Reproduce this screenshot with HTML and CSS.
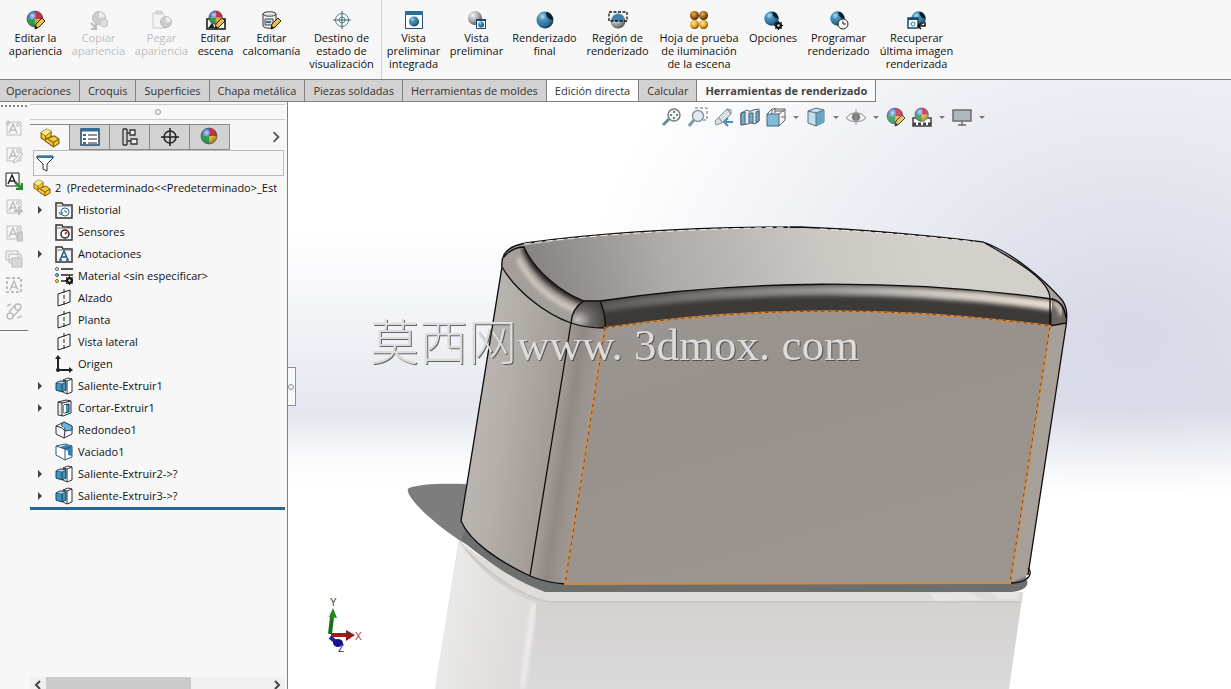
FILE: index.html
```html
<!DOCTYPE html>
<html lang="es">
<head>
<meta charset="utf-8">
<title>Herramientas de renderizado</title>
<link rel="stylesheet" href="styles.css">
</head>
<body>
<svg class="sprite" aria-hidden="true">
  <defs>
    <radialGradient id="gBlue" cx=".35" cy=".3" r=".75"><stop offset="0" stop-color="#b9def0"/><stop offset=".3" stop-color="#4a94be"/><stop offset=".75" stop-color="#2a6c96"/><stop offset="1" stop-color="#0d2738"/></radialGradient>
    <radialGradient id="gGray" cx=".35" cy=".3" r=".8"><stop offset="0" stop-color="#f6f6f6"/><stop offset=".5" stop-color="#aaa"/><stop offset="1" stop-color="#444"/></radialGradient>
    <radialGradient id="gGold" cx=".4" cy=".35" r=".7"><stop offset="0" stop-color="#ffe9a0"/><stop offset=".6" stop-color="#e0a020"/><stop offset="1" stop-color="#5a3000"/></radialGradient>
    <radialGradient id="gBrown" cx=".4" cy=".35" r=".7"><stop offset="0" stop-color="#f0b050"/><stop offset=".6" stop-color="#94560e"/><stop offset="1" stop-color="#2c1600"/></radialGradient>
    <radialGradient id="gShine" cx=".35" cy=".3" r=".7"><stop offset="0" stop-color="#fff" stop-opacity=".75"/><stop offset=".4" stop-color="#fff" stop-opacity="0"/><stop offset="1" stop-color="#000" stop-opacity=".3"/></radialGradient>
  </defs>
  <symbol id="ball" viewBox="0 0 20 20"><path d="M9 9V1a8 8 0 0 0-8 7z" fill="#3a66c8"/><path d="M9 9V1a8 8 0 0 1 8 8z" fill="#c8283c"/><path d="M9 9H17a8 8 0 0 1-9 8z" fill="#e0b02c"/><path d="M9 9 1 8a8 8 0 0 0 8 9z" fill="#27994a"/><circle cx="9" cy="9" r="8" fill="url(#gShine)" stroke="#444" stroke-width=".6"/></symbol>
  <symbol id="pencil" viewBox="0 0 20 20"><path d="M16 8l3 3-6 6-4 2 1-5z" fill="#f0c040" stroke="#222"/><path d="M9 19l1-3 2 2z" fill="#111"/></symbol>
  <symbol id="edit-app" viewBox="0 0 20 20"><use href="#ball" width="20" height="20"/><use href="#pencil"/></symbol>
  <symbol id="copy-app" viewBox="0 0 20 20"><circle cx="10" cy="8" r="6.5" fill="#ccc" stroke="#bbb"/><path d="M10 8V2a7 7 0 0 1 6 5z" fill="#eee"/><circle cx="15" cy="13" r="4" fill="#ddd" stroke="#c4c4c4"/><path d="M2 13l5 5M7 14v5H2" fill="none" stroke="#bbb" stroke-width="2"/></symbol>
  <symbol id="paste-app" viewBox="0 0 20 20"><path d="M1 3h9l4 4v11H1z" fill="#f4f4f4" stroke="#c8c8c8"/><path d="M4 1h6v3H4z" fill="#ddd" stroke="#c8c8c8"/><circle cx="14" cy="12" r="5.500" fill="#ccc" stroke="#bbb"/><path d="M14 12V7a5 5 0 0 1 5 5z" fill="#eee"/></symbol>
  <symbol id="edit-scene" viewBox="0 0 20 20"><path d="M1 9v10h18V9z" fill="#fff" stroke="#111" stroke-width="1.500"/><path d="M2 18l4-5 3 5z" fill="#222"/><use href="#ball" x="2" width="17" height="17"/><use href="#pencil"/></symbol>
  <symbol id="scene-view" viewBox="0 0 20 20"><path d="M1 11h18v8H1z" fill="#fff" stroke="#222" stroke-width="1.500"/><path d="M1 17h18" stroke="#222" stroke-width="3" stroke-dasharray="3 2"/><use href="#ball" x="2" width="17" height="17"/></symbol>
  <symbol id="decal" viewBox="0 0 20 20"><path d="M1 4c0-3 13-3 13 0v12c0 3-12 3-13 0z" fill="#eee" stroke="#333"/><path d="M1 4c1 3 12 3 13 0M3 9h8v6H3z" fill="#d8d8d8" stroke="#444"/><path d="M4 12h5" stroke="#3778a4" stroke-width="2"/><use href="#pencil"/></symbol>
  <symbol id="target" viewBox="0 0 20 20"><circle cx="10" cy="10" r="6.500" fill="none" stroke="#5a7c86"/><circle cx="10" cy="10" r="3" fill="none" stroke="#3f9a9c"/><path d="M10 1v18M1 10h18" stroke="#446068"/></symbol>
  <symbol id="prev-int" viewBox="0 0 20 20"><path d="M1.500 1.500h17v17h-17z" fill="#fff" stroke="#1f4f70"/><path d="M1 1h18v4H1z" fill="#2c6c98"/><circle cx="10" cy="11.500" r="5" fill="url(#gBlue)"/></symbol>
  <symbol id="prev" viewBox="0 0 20 20"><circle cx="8" cy="8" r="7" fill="url(#gGray)"/><path d="M9.500 9.500h9v9h-9z" fill="#fff" stroke="#174a6c"/><path d="M9 9h10v2H9z" fill="#174a6c"/><circle cx="14" cy="14.500" r="3" fill="url(#gBlue)"/></symbol>
  <symbol id="render" viewBox="0 0 20 20"><circle cx="10" cy="10" r="8.500" fill="url(#gBlue)"/><path d="M11 2c4 0 7 4 7 8-4 0-7-3-7-8z" fill="#0b1b28"/></symbol>
  <symbol id="region" viewBox="0 0 20 20"><circle cx="10" cy="11" r="7.500" fill="url(#gGray)"/><path d="M5 6q5-5 10 0l2 5H3z" fill="#3f83ac"/><path d="M1 2h18v9H1z" fill="none" stroke="#111" stroke-width="1.300" stroke-dasharray="3 1.500"/></symbol>
  <symbol id="proof" viewBox="0 0 20 20"><circle cx="5.500" cy="5.500" r="4.500" fill="url(#gBrown)"/><circle cx="14.500" cy="5.500" r="4.500" fill="url(#gBrown)"/><circle cx="5.500" cy="14.500" r="4.500" fill="url(#gGold)"/><circle cx="14.500" cy="14.500" r="4.500" fill="url(#gGold)"/></symbol>
  <symbol id="gear" viewBox="0 0 10 10"><circle cx="5" cy="5" r="3" fill="none" stroke="#151515" stroke-width="2"/><path d="M5 0v10M0 5h10M1.500 1.500l7 7M8.500 1.500l-7 7" stroke="#151515" stroke-width="1.300"/><circle cx="5" cy="5" r="1.400" fill="#ddd"/></symbol>
  <symbol id="options" viewBox="0 0 20 20"><use href="#render" width="17" height="17"/><use href="#gear" x="11" y="11" width="9" height="9"/></symbol>
  <symbol id="sched" viewBox="0 0 20 20"><use href="#render" width="17" height="17"/><circle cx="14" cy="14" r="5" fill="#fff" stroke="#222"/><path d="M14 11v3h3" fill="none" stroke="#222"/></symbol>
  <symbol id="recall" viewBox="0 0 20 20"><use href="#render" x="3" width="17" height="17"/><path d="M1 8h10v10H1z" fill="#fff" stroke="#174a6c" stroke-width="1.500"/><path d="M1 9h10" stroke="#174a6c" stroke-width="2"/><circle cx="6" cy="14" r="2" fill="#fff" stroke="#287"/><path d="M18 12v4h-6M14 13l-3 3 3 3" fill="none" stroke="#111" stroke-width="1.500"/></symbol>
  <symbol id="part" viewBox="0 0 18 18"><path d="M1 4l5-3 4 2v5l3-1 4 3v4l-5 3L1 9z" fill="#f4c838" stroke="#7a5a08"/><path d="M1 4l4 3 5-4M5 7v4M5 10l5-2M12 17v-4l5-3M12 13L7 10" fill="none" stroke="#7a5a08"/><path d="M1 4l5-3 4 2-5 4z" fill="#ffe98a"/></symbol>
  <symbol id="props" viewBox="0 0 20 20"><path d="M1 2h18v16H1z" fill="#fff" stroke="#1b4a70" stroke-width="1.500"/><path d="M1 3h18" stroke="#2c6c98" stroke-width="3"/><path d="M3 8h3M3 12h3M3 16h3" stroke="#2c6c98" stroke-width="2"/><path d="M8 8h9M8 12h9M8 16h9" stroke="#222"/></symbol>
  <symbol id="config" viewBox="0 0 20 20"><path d="M3 2h4M3 18h4M3 2v16M7 2v16M7 6h4M7 14h4" fill="none" stroke="#333" stroke-width="1.300"/><path d="M10 3h5v5h-5zM11 12h6v5h-6z" fill="#eee" stroke="#333" stroke-width="1.300"/></symbol>
  <symbol id="cross" viewBox="0 0 20 20"><circle cx="10" cy="10" r="6" fill="none" stroke="#222" stroke-width="1.500"/><path d="M10 1v18M1 10h18" stroke="#222" stroke-width="1.500"/></symbol>
  <symbol id="funnel" viewBox="0 0 18 18"><path d="M1 2h16v2l-6 6v7l-4-2v-5L1 4z" fill="#fff" stroke="#333"/><path d="M1 2h16v2H1z" fill="#2c7cab"/></symbol>
  <symbol id="folder" viewBox="0 0 18 18"><path d="M1 17V2h6l1 2h9v13z" fill="#f3f6fa" stroke="#333" stroke-width="1.500"/><path d="M1 5h16" stroke="#777"/></symbol>
  <symbol id="history" viewBox="0 0 18 18"><use href="#folder"/><circle cx="10" cy="11" r="4" fill="#fff" stroke="#2c6c98"/><path d="M10 9v2h2M4 11l2 3 2-3" fill="none" stroke="#2c6c98"/></symbol>
  <symbol id="sensor" viewBox="0 0 18 18"><use href="#folder"/><circle cx="10" cy="11" r="4" fill="#fff" stroke="#222" stroke-width="1.500"/><path d="M10 11l2-2" stroke="#c33" stroke-width="2"/></symbol>
  <symbol id="annot" viewBox="0 0 18 18"><use href="#folder"/><path d="M5 15l4-9 4 9M6 12h6M4 15h3M11 15h3" fill="none" stroke="#275c84" stroke-width="1.500"/></symbol>
  <symbol id="material" viewBox="0 0 18 18"><path d="M6 2h12M6 8h12M6 14h5" stroke="#222" stroke-width="1.500"/><circle cx="2" cy="2" r="1.500" fill="#fff" stroke="#555"/><circle cx="2" cy="8" r="1.500" fill="#9cd" stroke="#267"/><circle cx="2" cy="14" r="1.500" fill="#fe6" stroke="#862"/><use href="#gear" x="10" y="9" width="9" height="9"/></symbol>
  <symbol id="plane" viewBox="0 0 18 18"><path d="M3 5l12-4v12L3 17z" fill="none" stroke="#222"/><path d="M9 0v18" stroke="#222" stroke-dasharray="4 2"/></symbol>
  <symbol id="origin" viewBox="0 0 18 18"><path d="M3 2v13h13" fill="none" stroke="#222" stroke-width="2"/><path d="M3 0l3 4H0zM18 15l-4-3v6z" fill="#222"/><circle cx="3" cy="15" r="2" fill="#222"/></symbol>
  <symbol id="boss" viewBox="0 0 18 18"><path d="M8 3l5-2 4 1v13l-5 2-4-2z" fill="#fff" stroke="#333"/><path d="M12 4l5-2M12 4v13M8 3l4 1" stroke="#333"/><path d="M1 6l4-2 6 1v8l-4 2-6-2z" fill="#3f93be" stroke="#14405c"/><path d="M1 6l6 1 4-2-6-1z" fill="#a9d8ee" stroke="#14405c" stroke-width=".6"/><path d="M7 7v8" stroke="#14405c"/></symbol>
  <symbol id="cut" viewBox="0 0 18 18"><path d="M3 3l8-2 5 1v12l-8 3-5-1z" fill="#e4eaee" stroke="#333"/><path d="M3 3l4 1 9-2M7 4v13" fill="none" stroke="#333"/><path d="M9 6l5-1v8l-5 1z" fill="#3f93be" stroke="#14405c"/><path d="M9 6l2 0v7l-2 1z" fill="#fff"/></symbol>
  <symbol id="fillet" viewBox="0 0 18 18"><path d="M1 5l8-4 8 4v8l-8 4-8-4z" fill="#f6f6f6" stroke="#333"/><path d="M9 1l8 4v4l-7 1c0-3-1-4-4-6z" fill="#6fb2d3" stroke="#285a78"/><path d="M1 5l6 2 3 3-1 7" fill="none" stroke="#333"/></symbol>
  <symbol id="shell" viewBox="0 0 18 18"><path d="M1 3l9-2 7 2v11l-7 3-9-5z" fill="#fff" stroke="#285a78"/><path d="M5 4l6-2 6 1v10l-4-1V8z" fill="#2b82ad"/><path d="M1 3l9 3v11M10 6l7-3" fill="none" stroke="#285a78"/></symbol>
  <symbol id="caret" viewBox="0 0 8 8"><path d="M1 3h6L4 6z" fill="#666"/></symbol>
  <symbol id="tri" viewBox="0 0 8 8"><path d="M2 0l4 4-4 4z" fill="#444"/></symbol>
  <symbol id="zoomfit" viewBox="0 0 20 20"><circle cx="12" cy="8" r="6" fill="#eef4f8" stroke="#666" stroke-width="1.500"/><path d="M7 12l-6 6" stroke="#4a7490" stroke-width="3"/><path d="M12 4v2M12 10v2M8 8h2M14 8h2" stroke="#333" stroke-width="1.500"/></symbol>
  <symbol id="zoomarea" viewBox="0 0 20 20"><path d="M7 1h12v12H7" fill="none" stroke="#555" stroke-dasharray="3 2"/><circle cx="10" cy="9" r="5.500" fill="#dce8ee" stroke="#789" stroke-width="1.500"/><path d="M6 13l-5 6" stroke="#6d8796" stroke-width="3"/></symbol>
  <symbol id="prevview" viewBox="0 0 20 20"><path d="M1 14L13 2l4 1v4L8 16l-6 2z" fill="#d7dde0" stroke="#678"/><path d="M5 11l3 4M13 2l4 5" fill="none" stroke="#567"/><path d="M19 15h-7M14 11l-4 4 4 4" fill="none" stroke="#287aa8" stroke-width="2"/></symbol>
  <symbol id="section" viewBox="0 0 20 20"><path d="M1 6l6-3q3 3 6 0l6-1v12l-4 3q-4-3-7 0l-7 1z" fill="#dde9ef" stroke="#345"/><path d="M1 6l4-1v12l-4 1zM9 6h4v10H9zM16 5l3-1v10l-3 2z" fill="#5f9fc1" stroke="#345"/></symbol>
  <symbol id="orient" viewBox="0 0 20 20"><path d="M1 7h12v12H1z" fill="#6fb0cf" stroke="#234c63"/><path d="M1 7l5-5h13v11l-6 6M13 7l6-5M6 2v5M9 1v5M9 4h9M15 10h4" fill="none" stroke="#444"/></symbol>
  <symbol id="cube" viewBox="0 0 20 20"><path d="M2 4l8-3 8 2v12l-8 4-8-3z" fill="#b9dbea" stroke="#456"/><path d="M10 6l8-3v12l-8 4z" fill="#4c9ac0"/><path d="M2 4l8 2v13M10 6l8-3" fill="none" stroke="#456"/></symbol>
  <symbol id="eye" viewBox="0 0 20 20"><path d="M0 11C5 4 15 4 20 11c-5 5-15 5-20 0z" fill="#eee" stroke="#777"/><circle cx="10" cy="10" r="4" fill="#666"/><path d="M10 2v16" stroke="#888"/></symbol>
  <symbol id="monitor" viewBox="0 0 20 20"><path d="M1 3h18v11H1z" fill="#a4afb4" stroke="#555" stroke-width="1.500"/><path d="M10 14v4M6 18h8" stroke="#555" stroke-width="1.500"/></symbol>
  <symbol id="note" viewBox="0 0 18 18"><path d="M2 2h14v13H2z" fill="none" stroke="currentColor"/><path d="M4 13l4-9 4 9M5 10h6" fill="none" stroke="currentColor" stroke-width="1.500"/><circle cx="13" cy="5" r="1.500" fill="none" stroke="currentColor"/></symbol>
  <symbol id="note-new" viewBox="0 0 18 18"><use href="#note"/><path d="M3 0v6M0 3h6" stroke="currentColor"/></symbol>
  <symbol id="note-edit" viewBox="0 0 18 18"><use href="#note"/><path d="M16 6l2 2-7 8-3 1 1-3z" fill="#eee" stroke="currentColor"/></symbol>
  <symbol id="note-go" viewBox="0 0 18 18"><path d="M1 1h13v13H1z" fill="#fff" stroke="#222"/><path d="M3 12l4-9 4 9M4 9h6" fill="none" stroke="#222" stroke-width="1.500"/><path d="M10 10l6 6M17 11v6h-6" fill="none" stroke="#2b8a2b" stroke-width="2.500"/></symbol>
  <symbol id="note-plus" viewBox="0 0 18 18"><use href="#note"/><path d="M14 8v9M9 13h9" stroke="currentColor" stroke-width="2"/></symbol>
  <symbol id="note-lock" viewBox="0 0 18 18"><use href="#note"/><path d="M12 8h6v9h-6z" fill="#ccc" stroke="currentColor"/></symbol>
  <symbol id="stack" viewBox="0 0 18 18"><path d="M1 1h12v9H1zM4 4h12v9H4z" fill="#f2f2f2" stroke="currentColor"/><path d="M7 8h10v9H7z" fill="#d8d8d8" stroke="currentColor"/></symbol>
  <symbol id="note-frame" viewBox="0 0 18 18"><path d="M2 2h14v14H2z" fill="none" stroke="currentColor" stroke-width="2" stroke-dasharray="3 2"/><path d="M5 14l4-9 4 9M6 11h6" fill="none" stroke="currentColor" stroke-width="1.500"/></symbol>
  <symbol id="links" viewBox="0 0 18 18"><circle cx="5" cy="14" r="3" fill="none" stroke="currentColor" stroke-width="1.500"/><circle cx="13" cy="5" r="3" fill="none" stroke="currentColor" stroke-width="1.500"/><path d="M4 10l7-8M8 15l7-8M2 4l4-2M12 16l5-2" stroke="currentColor" stroke-width="1.500"/></symbol>
</svg>

<header class="ribbon">
  <div class="group">
    <button class="cmd w63"><svg><use href="#edit-app"/></svg><span>Editar la<br>apariencia</span></button>
    <button class="cmd w63" disabled><svg><use href="#copy-app"/></svg><span>Copiar<br>apariencia</span></button>
    <button class="cmd w63" disabled><svg><use href="#paste-app"/></svg><span>Pegar<br>apariencia</span></button>
    <button class="cmd w45"><svg><use href="#edit-scene"/></svg><span>Editar<br>escena</span></button>
    <button class="cmd w67"><svg><use href="#decal"/></svg><span>Editar<br>calcomanía</span></button>
    <button class="cmd w73"><svg><use href="#target"/></svg><span>Destino de<br>estado de<br>visualización</span></button>
  </div>
  <div class="group">
    <button class="cmd w63"><svg><use href="#prev-int"/></svg><span>Vista<br>preliminar<br>integrada</span></button>
    <button class="cmd w63"><svg><use href="#prev"/></svg><span>Vista<br>preliminar</span></button>
    <button class="cmd w73"><svg><use href="#render"/></svg><span>Renderizado<br>final</span></button>
    <button class="cmd w73"><svg><use href="#region"/></svg><span>Región de<br>renderizado</span></button>
    <button class="cmd w90"><svg><use href="#proof"/></svg><span>Hoja de prueba<br>de iluminación<br>de la escena</span></button>
    <button class="cmd w58"><svg><use href="#options"/></svg><span>Opciones</span></button>
    <button class="cmd w73"><svg><use href="#sched"/></svg><span>Programar<br>renderizado</span></button>
    <button class="cmd w83"><svg><use href="#recall"/></svg><span>Recuperar<br>última imagen<br>renderizada</span></button>
  </div>
</header>

<div class="stage">
  <nav class="tabs">
    <button>Operaciones</button><button>Croquis</button><button>Superficies</button><button>Chapa metálica</button><button>Piezas soldadas</button><button>Herramientas de moldes</button><button class="light">Edición directa</button><button>Calcular</button><button class="current">Herramientas de renderizado</button>
  </nav>
  <div class="work">
    <aside class="strip">
      <div class="grip"></div>
      <button aria-label="Nueva nota"><svg><use href="#note-new"/></svg></button>
      <button aria-label="Editar nota"><svg><use href="#note-edit"/></svg></button>
      <button aria-label="Ir a nota"><svg><use href="#note-go"/></svg></button>
      <button aria-label="Agregar nota"><svg><use href="#note-plus"/></svg></button>
      <button aria-label="Bloquear nota"><svg><use href="#note-lock"/></svg></button>
      <button aria-label="Apilar"><svg><use href="#stack"/></svg></button>
      <button aria-label="Marco"><svg><use href="#note-frame"/></svg></button>
      <button aria-label="Vincular"><svg><use href="#links"/></svg></button>
    </aside>
    <aside class="panel">
      <div class="handle"><i class="dot"></i></div>
      <div class="ptabs">
        <button class="on" aria-label="Árbol"><svg><use href="#part"/></svg></button>
        <button aria-label="Propiedades"><svg><use href="#props"/></svg></button>
        <button aria-label="Configuraciones"><svg><use href="#config"/></svg></button>
        <button aria-label="Cotas"><svg><use href="#cross"/></svg></button>
        <button aria-label="Aspectos"><svg><use href="#ball"/></svg></button>
        <button class="more" aria-label="Más"><svg viewBox="0 0 10 10"><path d="M3 1l4 4-4 4" fill="none" stroke="#555" stroke-width="1.500"/></svg></button>
      </div>
      <label class="filter"><svg><use href="#funnel"/></svg><input type="text" aria-label="Filtro"></label>
      <div class="root"><svg><use href="#part"/></svg><span>2&nbsp; (Predeterminado&lt;&lt;Predeterminado&gt;_Est</span></div>
      <ul class="tree">
        <li><button aria-label="Expandir"><svg><use href="#tri"/></svg></button><svg class="ico"><use href="#history"/></svg>Historial</li>
        <li><i></i><svg class="ico"><use href="#sensor"/></svg>Sensores</li>
        <li><button aria-label="Expandir"><svg><use href="#tri"/></svg></button><svg class="ico"><use href="#annot"/></svg>Anotaciones</li>
        <li><i></i><svg class="ico"><use href="#material"/></svg>Material &lt;sin especificar&gt;</li>
        <li><i></i><svg class="ico"><use href="#plane"/></svg>Alzado</li>
        <li><i></i><svg class="ico"><use href="#plane"/></svg>Planta</li>
        <li><i></i><svg class="ico"><use href="#plane"/></svg>Vista lateral</li>
        <li><i></i><svg class="ico"><use href="#origin"/></svg>Origen</li>
        <li><button aria-label="Expandir"><svg><use href="#tri"/></svg></button><svg class="ico"><use href="#boss"/></svg>Saliente-Extruir1</li>
        <li><button aria-label="Expandir"><svg><use href="#tri"/></svg></button><svg class="ico"><use href="#cut"/></svg>Cortar-Extruir1</li>
        <li><i></i><svg class="ico"><use href="#fillet"/></svg>Redondeo1</li>
        <li><i></i><svg class="ico"><use href="#shell"/></svg>Vaciado1</li>
        <li><button aria-label="Expandir"><svg><use href="#tri"/></svg></button><svg class="ico"><use href="#boss"/></svg>Saliente-Extruir2-&gt;?</li>
        <li><button aria-label="Expandir"><svg><use href="#tri"/></svg></button><svg class="ico"><use href="#boss"/></svg>Saliente-Extruir3-&gt;?</li>
      </ul>
      <div class="hscroll">
        <button aria-label="Izquierda"><svg viewBox="0 0 10 10"><path d="M7 1L3 5l4 4" fill="none" stroke="#444" stroke-width="2"/></svg></button>
        <div class="track"><div class="thumb"></div></div>
        <button aria-label="Derecha"><svg viewBox="0 0 10 10"><path d="M3 1l4 4-4 4" fill="none" stroke="#444" stroke-width="2"/></svg></button>
      </div>
    </aside>
    <main class="view">
      <svg class="scene" viewBox="288 102 943 587" role="img" aria-label="Modelo">
        <defs>
          <linearGradient id="sInner" x1="530" y1="290" x2="900" y2="180" gradientUnits="userSpaceOnUse"><stop offset="0" stop-color="#85817e"/><stop offset=".35" stop-color="#aeaaa7"/><stop offset=".75" stop-color="#cbc8c4"/><stop offset="1" stop-color="#d3d0cc"/></linearGradient>
          <linearGradient id="sLeft" x1="475" y1="400" x2="560" y2="412" gradientUnits="userSpaceOnUse"><stop offset="0" stop-color="#bbb6b1"/><stop offset=".4" stop-color="#b3ada8"/><stop offset="1" stop-color="#9f9893"/></linearGradient>
          <linearGradient id="sRound" x1="551" y1="450" x2="585" y2="455" gradientUnits="userSpaceOnUse"><stop offset="0" stop-color="#a29b96"/><stop offset=".4" stop-color="#8f8985"/><stop offset=".7" stop-color="#99928d"/><stop offset="1" stop-color="#a09993"/></linearGradient>
          <linearGradient id="sFront" x1="600" y1="310" x2="680" y2="590" gradientUnits="userSpaceOnUse"><stop offset="0" stop-color="#9a9692"/><stop offset=".4" stop-color="#99918b"/><stop offset="1" stop-color="#9b948f"/></linearGradient>
          <linearGradient id="sHi" x1="600" y1="0" x2="1050" y2="0" gradientUnits="userSpaceOnUse"><stop offset="0" stop-color="#5d5a58"/><stop offset=".5" stop-color="#9a9693"/><stop offset=".75" stop-color="#cfc9c3"/><stop offset="1" stop-color="#e8ddd2"/></linearGradient>
          <linearGradient id="sRefl" x1="0" y1="590" x2="0" y2="689" gradientUnits="userSpaceOnUse"><stop offset="0" stop-color="#d4d0ce"/><stop offset="1" stop-color="#dadada"/></linearGradient>
          <linearGradient id="sReflL" x1="440" y1="620" x2="535" y2="635" gradientUnits="userSpaceOnUse"><stop offset="0" stop-color="#ebebea"/><stop offset=".6" stop-color="#e2e0df"/><stop offset="1" stop-color="#dcd9d8"/></linearGradient>
          <radialGradient id="sKnob" cx=".2" cy=".7" r=".8"><stop offset="0" stop-color="#c4c0bc"/><stop offset=".5" stop-color="#6f6a67"/><stop offset="1" stop-color="#4a4644"/></radialGradient>
          <filter id="soft" x="-10%" y="-50%" width="120%" height="200%"><feGaussianBlur stdDeviation="2"/></filter>
          <clipPath id="cFront"><path d="M601 301C740 280 900 278 1052 299V326C900 306 750 306 605 328z"/></clipPath>
          <clipPath id="cSide"><path d="M502 267C500 255 512 246 524 247 534 270 560 292 584 301L571 323C545 314 515 290 502 267z"/></clipPath>
        </defs>
        <path d="M467 484C440 483 418 484 409 488 402 492 425 517 459 540L545 591H1000L1026 583V570H540L461 521z" fill="#7d7d7d"/>
        <path d="M459 540L435 689H1009L1023 592H545C520 580 480 560 459 540z" fill="url(#sRefl)"/>
        <path d="M459 542L435 689H524L537 603C500 590 475 565 459 542z" fill="url(#sReflL)"/>
        <path d="M459 541C485 562 520 582 545 592H1023L1020 601H545C515 594 480 568 459 541z" fill="#dedbd9"/>
        <path d="M466 550C490 575 520 595 548 602H1019" fill="none" stroke="#c8c5c3" stroke-width="1.500"/>
        <path d="M534 604L522 689" stroke="#f0efee" stroke-width="5" filter="url(#soft)"/>
        <path d="M930 593l40-1 12 8-48 1zM990 592h30l-4 7h-18z" fill="#e8e6e5"/>
        <path d="M461 540C495 568 520 583 545 592H1012C1024 591 1029 586 1027 580L565 581 530 574 465 530z" fill="#6d6e6e"/>
        <path d="M502 262C504 247 514 245 526 243 620 230 720 227 800 227 880 230 940 237 983 242 1010 251 1044 279 1062 300 1068 308 1067 318 1066 326L1028 575 1011 583 565 584C550 583 540 579 530 576 500 562 470 542 461 521z" fill="#a7a099"/>
        <path d="M524 246C620 231 720 227 800 227 880 230 940 237 983 242 1010 252 1048 278 1052 299 900 278 740 280 600 301L584 301C560 292 534 270 524 246z" fill="url(#sInner)"/>
        <path d="M502 267C515 290 545 314 571 323L530 576C500 562 470 542 461 521z" fill="url(#sLeft)"/>
        <path d="M571 323L605 328 565 584C550 583 540 579 530 576z" fill="url(#sRound)"/>
        <path d="M605 328C750 306 900 306 1050 326L1010 583H565z" fill="url(#sFront)"/>
        <g clip-path="url(#cSide)">
          <path d="M495 240h100v90h-100z" fill="#a39e99"/>
          <path d="M526 246C535 272 560 290 586 301" fill="none" stroke="#2c2826" stroke-width="10" filter="url(#soft)"/>
          <path d="M518 258C530 285 555 303 578 311" fill="none" stroke="#ddd2ca" stroke-width="4" filter="url(#soft)"/>
        </g>
        <path d="M601 301C740 280 900 278 1052 299V326C900 306 750 306 605 328z" fill="#3d3936"/>
        <g clip-path="url(#cFront)">
          <path d="M601 307C740 286 900 284 1056 306" fill="none" stroke="url(#sHi)" stroke-width="10" filter="url(#soft)"/>
        </g>
        <path d="M584 301H600Q606 315 605 328 585 328 571 323 572 308 584 301z" fill="url(#sKnob)"/>
        <path d="M1052 298C1064 300 1067 312 1066 322L1052 326z" fill="#6b6560"/>
        <path d="M1053 303Q1062 305 1061 315" fill="none" stroke="#e6dacd" stroke-width="4" filter="url(#soft)"/>
        <g fill="none" stroke="#0c0c0c" stroke-width="1.300">
          <path d="M502 267C500 250 514 245 526 243 620 230 720 227 800 227 880 230 940 237 983 242 1010 251 1044 279 1062 300 1068 308 1067 318 1066 326L1028 575M1011 583Q1024 583 1028 577M502 267L461 521C470 542 500 562 530 576 540 580 550 583 565 584"/>
          <path d="M504 257Q512 247 524 247C534 270 560 292 584 301H600C740 280 900 278 1052 299"/>
          <path d="M502 267C515 290 545 314 571 323L530 576M571 323Q585 328 605 328M584 301Q572 308 571 323M600 301Q606 314 605 328"/>
          <path d="M985 243C1020 263 1049 280 1050 298V326L1066 323M1052 299Q1064 302 1066 318M1028 568Q1033 573 1027 579"/>
        </g>
        <path d="M524 244C620 231 720 229 790 227M820 229Q900 233 975 242" fill="none" stroke="#eee" stroke-dasharray="7 4"/>
        <g fill="none" stroke="#d08a45" stroke-width="2"><path d="M605 328C750 306 900 306 1050 326L1010 583 565 584z"/><path d="M605 328C750 306 900 306 1050 326L1010 583M605 328L565 584" stroke="#6a4c2c" stroke-width="1" stroke-dasharray="3 4"/></g>
        <path d="M330 634L332 617" stroke="#187018" stroke-width="4"/><path d="M333 608l4 10-8-1z" fill="#1f8a1f"/>
        <path d="M331 635H347" stroke="#a01818" stroke-width="4"/><path d="M346 630l9 5-9 6z" fill="#8c1a1a"/>
        <path d="M330 637L337 643" stroke="#2020a0" stroke-width="4"/><ellipse cx="338" cy="643" rx="5" ry="4" fill="#141490"/>
        <g class="axes"><text x="330" y="606" fill="#444">Y</text><text x="355" y="640" fill="#a33">X</text><text x="338" y="652" fill="#22a">Z</text></g>
        <text class="mark" x="370" y="360"><tspan class="cjk">莫西网</tspan>www. 3dmox. com</text>
      </svg>
      <div class="hud">
        <button aria-label="Zoom para ajustar"><svg><use href="#zoomfit"/></svg></button>
        <button aria-label="Zoom encuadre"><svg><use href="#zoomarea"/></svg></button>
        <button aria-label="Vista previa"><svg><use href="#prevview"/></svg></button>
        <button aria-label="Vista de sección"><svg><use href="#section"/></svg></button>
        <button aria-label="Orientación"><svg><use href="#orient"/></svg></button><button class="dd" aria-label="Menú"><svg><use href="#caret"/></svg></button>
        <button aria-label="Estilo"><svg><use href="#cube"/></svg></button><button class="dd" aria-label="Menú"><svg><use href="#caret"/></svg></button>
        <button aria-label="Ocultar"><svg><use href="#eye"/></svg></button><button class="dd" aria-label="Menú"><svg><use href="#caret"/></svg></button>
        <button aria-label="Apariencia"><svg><use href="#edit-app"/></svg></button>
        <button aria-label="Escena"><svg><use href="#scene-view"/></svg></button><button class="dd" aria-label="Menú"><svg><use href="#caret"/></svg></button>
        <button aria-label="Configuración de vista"><svg><use href="#monitor"/></svg></button><button class="dd" aria-label="Menú"><svg><use href="#caret"/></svg></button>
      </div>
      <div class="splitter"><i class="dot"></i></div>
    </main>
  </div>
</div>
</body>
</html>
```

FILE: styles.css
```css
* { box-sizing: border-box; }
body {
  margin: 0;
  height: 100vh;
  display: flex;
  flex-direction: column;
  overflow: hidden;
  background: #f7f7f7;
  color: #111;
  font: 11px/16px "Open Sans", "Noto Sans", sans-serif;
}
button {
  margin: 0;
  padding: 0;
  border: 0;
  background: none;
  color: inherit;
  font: inherit;
}
svg { flex: none; }
.sprite { position: absolute; width: 0; height: 0; }

/* Command ribbon */
.ribbon { display: flex; height: 79px; background: #f7f7f7; }
.group { display: flex; padding-left: 4px; }
.group + .group { padding-left: 0; margin-left: 3px; border-left: 1px solid #d4d4d4; }
.cmd {
  display: flex;
  flex-direction: column;
  align-items: center;
  gap: 1px;
  padding-top: 10px;
  line-height: 13px;
  white-space: nowrap;
}
.cmd svg { width: 20px; height: 20px; }
.cmd:disabled { color: #bdbdbd; }
.w45 { width: 45px; }
.w58 { width: 58px; }
.w63 { width: 63px; }
.w67 { width: 67px; }
.w73 { width: 73px; }
.w83 { width: 83px; }
.w90 { width: 90px; }

/* Stage: tab row and work area share the sky backdrop */
.stage {
  flex: 1;
  min-height: 0;
  display: flex;
  flex-direction: column;
  border-top: 1px solid #808080;
  background:
    linear-gradient(to bottom, transparent 54%, #fff 68%),
    radial-gradient(ellipse 45% 75% at 92% 42%, #d6d9e6, transparent),
    linear-gradient(to bottom, #fff 25%, #e3e6ef 56%, #fff 68%);
}
.tabs { display: flex; height: 22px; }
.tabs button {
  padding: 0 8px;
  border-right: 1px solid #808080;
  border-bottom: 1px solid #808080;
  background: #d2d2d2;
  color: #333;
  white-space: nowrap;
}
.tabs button:first-child { padding-left: 6px; }
.tabs .light { background: #fff; }
.tabs .current { background: #fafafa; font-weight: 700; color: #444; }

.work { flex: 1; min-height: 0; display: flex; }

/* Annotation strip */
.strip { width: 30px; background: #f7f7f7; color: #bdbdbd; }
.grip { height: 14px; margin-right: 2px; background: radial-gradient(circle at 2px 4px, #888 1px, transparent 1px) 0 0 / 4px 14px; }
.strip button { display: block; height: 26px; padding-left: 5px; }
.strip svg { display: block; width: 18px; height: 18px; }
.strip::after { content: ""; display: block; width: 28px; margin-top: 6px; border-top: 1px solid #777; }

/* Feature tree panel */
.panel {
  width: 258px;
  display: flex;
  flex-direction: column;
  background: #f7f7f7;
  border-right: 1px solid #808080;
  padding: 2px 2px 0 0;
}
.dot { display: block; width: 6px; height: 6px; border: 1px solid #999; border-radius: 50%; background: #eee; }
.handle {
  height: 16px;
  display: flex;
  align-items: center;
  justify-content: center;
  border-top: 1px solid #ccc;
  border-bottom: 1px solid #ccc;
}
.ptabs { display: flex; height: 26px; margin-top: 4px; }
.ptabs button {
  width: 40px;
  display: flex;
  align-items: center;
  justify-content: center;
  border: 1px solid #888;
  border-left: 0;
  background: #d2d2d2;
}
.ptabs .on { background: #f7f7f7; border-bottom: 0; }
.ptabs .more { width: 18px; margin-left: auto; border: 0; background: none; }
.ptabs svg { width: 20px; height: 20px; }
.ptabs .more svg { width: 12px; height: 12px; }
.filter {
  height: 26px;
  margin: 0 1px 0 3px;
  padding-left: 2px;
  display: flex;
  align-items: center;
  border: 1px solid #bbb;
}
.filter svg { width: 18px; height: 18px; }
.filter input { flex: 1; min-width: 0; border: 0; background: none; outline: 0; font: inherit; }
.root { display: flex; align-items: center; height: 23px; padding-left: 3px; gap: 4px; white-space: nowrap; }
.root svg { width: 18px; height: 18px; }
.tree { list-style: none; margin: 0; padding: 0; border-bottom: 3px solid #2a6591; }
.tree li { display: flex; align-items: center; height: 22px; white-space: nowrap; }
.tree li > button, .tree li > i { width: 25px; flex: none; text-align: left; padding-left: 6px; }
.tree button svg { display: block; width: 8px; height: 8px; }
.tree .ico { width: 18px; height: 18px; margin-right: 5px; }
.hscroll { display: flex; height: 12px; margin-top: auto; background: #f0f0f0; }
.hscroll button { width: 16px; display: flex; justify-content: center; padding-top: 3px; }
.hscroll button svg { width: 10px; height: 10px; }
.track { flex: 1; }
.thumb { width: 65%; height: 100%; background: #cbcbcb; }

/* 3D viewport */
.view { position: relative; flex: 1; min-width: 0; }
.scene { display: block; width: 100%; height: 100%; }
.mark {
  font: 45px "Liberation Serif", serif;
  fill: #dedcdb;
  filter: drop-shadow(1px 1px 0 #444444cc);
}
.cjk { font: 49px "Noto Sans CJK SC", sans-serif; font-weight: 300; }
.axes { font: 10px "Liberation Sans", sans-serif; }
.hud { position: absolute; top: 5px; left: 371px; display: flex; opacity: .85; }
.hud button { width: 26px; height: 20px; display: flex; align-items: center; justify-content: center; }
.hud svg { width: 20px; height: 20px; }
.hud .dd { width: 14px; }
.hud .dd svg { width: 8px; height: 8px; }
.splitter {
  position: absolute;
  left: 0;
  top: 265px;
  width: 8px;
  height: 39px;
  display: flex;
  align-items: center;
  border: 1px solid #8a8f9c;
  border-left: 0;
  background: #f7f7f7;
}
```
